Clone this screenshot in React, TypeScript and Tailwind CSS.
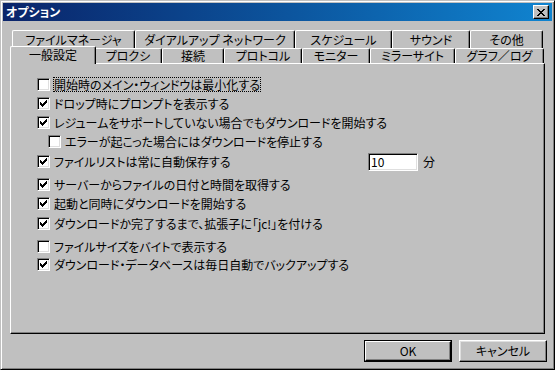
import React from 'react';

const jp = "font-['Noto_Sans_CJK_JP',sans-serif] [font-feature-settings:'palt']";

const backTabs = [
  { label: 'ファイルマネージャ', w: 'w-[123px]' },
  { label: 'ダイアルアップ ネットワーク', w: 'w-[160px]' },
  { label: 'スケジュール', w: 'w-[97px]' },
  { label: 'サウンド', w: 'w-[78px]' },
  { label: 'その他', w: 'w-[73px]' },
];

const frontTabs = [
  { label: '一般設定', w: 'w-[86px]', selected: true },
  { label: 'プロクシ', w: 'w-[68px]' },
  { label: '接続', w: 'w-[62px]' },
  { label: 'プロトコル', w: 'w-[78px]' },
  { label: 'モニター', w: 'w-[68px]' },
  { label: 'ミラーサイト', w: 'w-[85px]' },
  { label: 'グラフ／ログ', w: 'w-[89px]' },
];

const options = [
  { label: '開始時のメイン・ウィンドウは最小化する', checked: false, focused: true, mt: 'mt-0' },
  { label: 'ドロップ時にプロンプトを表示する', checked: true, mt: 'mt-0' },
  { label: 'レジュームをサポートしていない場合でもダウンロードを開始する', checked: true, mt: 'mt-0' },
  { label: 'エラーが起こった場合にはダウンロードを停止する', checked: false, indent: true, mt: 'mt-0' },
  { label: 'ファイルリストは常に自動保存する', checked: true, minutes: true, mt: 'mt-[1px]' },
  { label: 'サーバーからファイルの日付と時間を取得する', checked: true, mt: 'mt-[4px]' },
  { label: '起動と同時にダウンロードを開始する', checked: true, mt: 'mt-0' },
  { label: 'ダウンロードか完了するまで、拡張子に「jc!」を付ける', checked: true, mt: 'mt-[1px]' },
  { label: 'ファイルサイズをバイトで表示する', checked: false, mt: 'mt-[4px]' },
  { label: 'ダウンロード・データベースは毎日自動でバックアップする', checked: true, mt: 'mt-[-1px]' },
];

function CheckBox({ checked }: { checked: boolean }) {
  return (
    <span className="w-[13px] h-[13px] shrink-0 flex items-center justify-center bg-white border border-t-[#808080] border-l-[#808080] border-r-white border-b-white shadow-[inset_1px_1px_#000,inset_-1px_-1px_#dfdfdf]">
      {checked && (
        <svg width="7" height="7" viewBox="0 0 7 7" shapeRendering="crispEdges">
          <rect x="0" y="2" width="1" height="3" fill="#000" />
          <rect x="1" y="3" width="1" height="3" fill="#000" />
          <rect x="2" y="4" width="1" height="3" fill="#000" />
          <rect x="3" y="3" width="1" height="3" fill="#000" />
          <rect x="4" y="2" width="1" height="3" fill="#000" />
          <rect x="5" y="1" width="1" height="3" fill="#000" />
          <rect x="6" y="0" width="1" height="3" fill="#000" />
        </svg>
      )}
    </span>
  );
}

function Tab({ label, w, selected }: { label: string; w: string; selected?: boolean }) {
  if (selected) {
    return (
      <div
        className={`${w} relative z-10 -mx-[2px] -mb-[1px] h-[18px] bg-[#c0c0c0] border-t border-l border-white border-r border-r-black shadow-[inset_-1px_0_#808080] rounded-t-[2px] flex items-center justify-center text-[12px] leading-none pb-[1px]`}
      >
        {label}
      </div>
    );
  }
  return (
    <div
      className={`${w} h-full bg-[#c0c0c0] border-t border-l border-white border-r border-r-black shadow-[inset_-1px_0_#808080] rounded-t-[2px] flex items-center justify-center text-[12px] leading-none`}
    >
      {label}
    </div>
  );
}

function Button({ children, isDefault }: { children: React.ReactNode; isDefault?: boolean }) {
  if (isDefault) {
    return (
      <div className="w-[88px] h-[22px] border border-black">
        <div className="w-full h-full flex items-center justify-center text-[12px] border border-t-white border-l-white border-r-black border-b-black shadow-[inset_-1px_-1px_#808080]">
          {children}
        </div>
      </div>
    );
  }
  return (
    <div className="w-[88px] h-[22px] flex items-center justify-center text-[12px] border border-t-white border-l-white border-r-black border-b-black shadow-[inset_-1px_-1px_#808080,inset_1px_1px_#dfdfdf]">
      {children}
    </div>
  );
}

export default function App() {
  return (
    <div
      className={`${jp} w-[555px] h-[370px] bg-[#c0c0c0] text-black border border-t-[#c0c0c0] border-l-[#c0c0c0] border-r-black border-b-black shadow-[inset_1px_1px_#fff,inset_-1px_-1px_#808080] p-[2px] flex flex-col`}
    >
      {/* title bar */}
      <div className="h-[18px] shrink-0 bg-gradient-to-r from-[#0a246a] to-[#1084d0] flex items-center pl-[3px] pr-[3px]">
        <span className="text-white font-bold text-[12px] leading-none">オプション</span>
        <div className="ml-auto w-[16px] h-[14px] bg-[#c0c0c0] border border-t-white border-l-white border-r-black border-b-black shadow-[inset_-1px_-1px_#808080] flex items-center justify-center">
          <svg width="8" height="7" viewBox="0 0 8 7" shapeRendering="crispEdges">
            <path
              d="M0 0h2v1h-2zM6 0h2v1h-2zM1 1h2v1h-2zM5 1h2v1h-2zM2 2h4v1h-4zM3 3h2v1h-2zM2 4h4v1h-4zM1 5h2v1h-2zM5 5h2v1h-2zM0 6h2v1h-2zM6 6h2v1h-2z"
              fill="#000"
            />
          </svg>
        </div>
      </div>

      {/* tabs + panel */}
      <div className="mx-[7px] mt-[9px] flex flex-col">
        <div className="flex h-[18px] pl-[2px]">
          {backTabs.map((t) => (
            <Tab key={t.label} label={t.label} w={t.w} />
          ))}
        </div>
        <div className="flex items-end h-[15px] pl-[2px]">
          {frontTabs.map((t) => (
            <Tab key={t.label} label={t.label} w={t.w} selected={t.selected} />
          ))}
        </div>
        <div className="h-[271px] border border-t-white border-l-white border-r-black border-b-black shadow-[inset_-1px_-1px_#808080] pl-[26px] pt-[11px] flex flex-col">
          {options.map((o) => (
            <div key={o.label} className={`${o.mt} h-[19px] flex items-center ${o.indent ? 'pl-[11px]' : ''}`}>
              <div className={`flex items-center ${o.minutes ? 'w-[331px]' : ''}`}>
                <CheckBox checked={o.checked} />
                <span
                  className={`ml-[3px] border ${o.focused ? 'border-dotted border-black' : 'border-transparent'} text-[12px] leading-[13px] whitespace-nowrap`}
                >
                  {o.label}
                </span>
              </div>
              {o.minutes && (
                <>
                  <div className="w-[50px] h-[18px] bg-white border border-t-[#808080] border-l-[#808080] border-r-white border-b-white shadow-[inset_1px_1px_#000,inset_-1px_-1px_#dfdfdf] flex items-center pl-[2px] text-[12px] leading-none">
                    10
                  </div>
                  <span className="ml-[5px] text-[12px] leading-none">分</span>
                </>
              )}
            </div>
          ))}
        </div>
      </div>

      {/* buttons */}
      <div className="flex justify-end gap-[7px] mt-[6px] mr-[5px]">
        <Button isDefault>OK</Button>
        <Button>キャンセル</Button>
      </div>
    </div>
  );
}
